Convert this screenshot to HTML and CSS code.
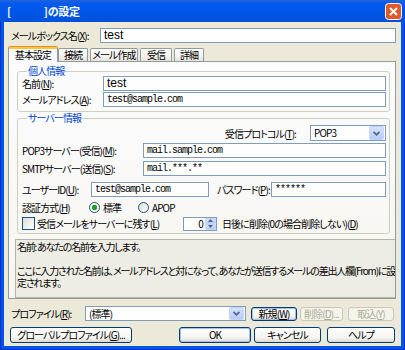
FILE: index.html
```html
<!DOCTYPE html>
<html lang="ja">

<head>
    <meta charset="UTF-8">
    <meta name="viewport" content="width=device-width, initial-scale=1.0">
    <title>の設定</title>
    <link rel="stylesheet" href="styles.css">
</head>

<body>
    <div class="window">
        <div class="titlebar">
            <span class="title">[<span class="blank"></span>]の設定</span>
            <span class="close">
                <svg width="17" height="17" viewBox="0 0 17 17">
                    <rect x="0.5" y="0.5" width="16" height="16" rx="3" fill="#E0592A" stroke="#fff" />
                    <path d="M5 5l7 7M12 5l-7 7" stroke="#fff" stroke-width="2" />
                </svg>
            </span>
        </div>

        <div class="client">
            <div class="mailbox">
                <label class="lbl-mailbox">メールボックス名(<u>X</u>):</label>
                <div class="edit sans grow">test</div>
            </div>

            <div class="tabs">
                <span class="tab active">基本設定</span>
                <span class="tab tab-conn">接続</span>
                <span class="tab tab-compose">メール作成</span>
                <span class="tab tab-recv">受信</span>
                <span class="tab tab-detail">詳細</span>
            </div>

            <div class="panel">
                <fieldset class="group personal">
                    <legend>個人情報</legend>
                    <div class="row">
                        <label class="lbl-personal">名前(<u>N</u>):</label>
                        <div class="edit sans grow">test</div>
                    </div>
                    <div class="row gap1">
                        <label class="lbl-personal">メールアドレス(<u>A</u>):</label>
                        <div class="edit mono grow">test@sample.com</div>
                    </div>
                </fieldset>

                <fieldset class="group server">
                    <legend>サーバー情報</legend>
                    <div class="row proto">
                        <label class="lbl-proto">受信プロトコル(<u>T</u>):</label>
                        <div class="select">
                            <span class="select-text">POP3</span>
                            <span class="drop"><svg width="7" height="5" viewBox="0 0 7 5"><path d="M0.5 0.8l3 3 3-3" fill="none" stroke="#4D6185" stroke-width="1.6" /></svg></span>
                        </div>
                    </div>
                    <div class="row gap2">
                        <label class="lbl-server">POP3サーバー(受信)(<u>M</u>):</label>
                        <div class="edit mono grow">mail.sample.com</div>
                    </div>
                    <div class="row gap3">
                        <label class="lbl-server">SMTPサーバー(送信)(<u>S</u>):</label>
                        <div class="edit mono grow">mail.***.**</div>
                    </div>
                    <div class="row gap6">
                        <label class="lbl-user">ユーザーID(<u>U</u>):</label>
                        <div class="edit mono user">test@sample.com</div>
                        <label class="lbl-pass">パスワード(<u>P</u>):</label>
                        <div class="edit mono grow">******</div>
                    </div>
                    <div class="row auth">
                        <label class="lbl-auth">認証方式(<u>H</u>)</label>
                        <span class="radio checked"></span><span class="opt">標準</span>
                        <span class="radio"></span><span class="opt">APOP</span>
                    </div>
                    <div class="row keep">
                        <span class="check"></span>
                        <span class="keep-text">受信メールをサーバーに残す(<u>L</u>)</span>
                        <div class="spin">
                            <span class="spin-value">0</span>
                            <span class="spin-btns">
                                <span class="spin-btn"><svg width="5" height="3" viewBox="0 0 5 3"><path d="M0 3l2.5-3 2.5 3z" fill="#4D6185" /></svg></span>
                                <span class="spin-btn"><svg width="5" height="3" viewBox="0 0 5 3"><path d="M0 0l2.5 3 2.5-3z" fill="#4D6185" /></svg></span>
                            </span>
                        </div>
                        <span class="after-text">日後に削除(0の場合削除しない)(<u>D</u>)</span>
                    </div>
                </fieldset>

                <div class="desc">名前: あなたの名前を入力します。<br><br>ここに入力された名前は、メールアドレスと対になって、あなたが送信するメールの差出人欄(From)に設<br>定されます。</div>
            </div>

            <div class="profile">
                <label class="lbl-profile">プロファイル(<u>R</u>):</label>
                <div class="select combo">
                    <span class="select-text">(標準)</span>
                    <span class="drop"><svg width="7" height="5" viewBox="0 0 7 5"><path d="M0.5 0.8l3 3 3-3" fill="none" stroke="#4D6185" stroke-width="1.6" /></svg></span>
                </div>
                <button class="btn default btn-new" type="button">新規(<u>W</u>)</button>
                <button class="btn disabled btn-del" type="button">削除(<u>D</u>)...</button>
                <button class="btn disabled btn-import" type="button">取込(<u>Y</u>)</button>
            </div>

            <div class="actions">
                <button class="btn btn-global" type="button">グローバルプロファイル(<u>G</u>)...</button>
                <button class="btn default btn-ok" type="button">OK</button>
                <button class="btn btn-cancel" type="button">キャンセル</button>
                <button class="btn btn-help" type="button">ヘルプ</button>
            </div>
        </div>
    </div>
</body>

</html>
```

FILE: styles.css
```css
* {
    margin: 0;
    padding: 0;
    box-sizing: border-box;
}

body {
    width: 405px;
    height: 350px;
    overflow: hidden;
    font-family: "Noto Sans CJK JP", sans-serif;
    font-size: 10px;
    letter-spacing: -0.9px;
    font-feature-settings: "palt";
    color: #000;
}

u {
    text-decoration: underline;
    text-underline-offset: 1px;
}

.window {
    height: 350px;
    display: flex;
    flex-direction: column;
    background: #0055E5;
    box-shadow: inset 1px 0 #0831D9, inset -1px 0 #0831D9, inset 0 -1px #0831D9;
}

/* title bar */
.titlebar {
    height: 22px;
    display: flex;
    align-items: center;
    justify-content: space-between;
    padding: 0 3px 0 7px;
    background: linear-gradient(#2B62C9 0, #0A5DEE 2px, #0058EE 6px, #0054E3 16px, #0050DD 22px);
    color: #fff;
}

.title {
    font-weight: bold;
    font-size: 11px;
    letter-spacing: -0.3px;
    line-height: 22px;
    display: flex;
}

.blank {
    width: 33px;
}

.close {
    display: flex;
    margin-top: 1px;
}

/* client area */
.client {
    flex: 1;
    margin: 0 4px 4px;
    padding: 0 5px 0 4px;
    background: #ECE9D8;
}

.mailbox {
    display: flex;
    height: 15px;
    margin-top: 6px;
}

.lbl-mailbox {
    width: 92px;
    padding-left: 3px;
    line-height: 15px;
    white-space: nowrap;
}

.edit {
    height: 15px;
    border: 1px solid #7F9DB9;
    background: #fff;
    padding-left: 3px;
    white-space: nowrap;
    overflow: hidden;
}

.grow {
    flex: 1;
}

.sans {
    font-family: "Liberation Sans", sans-serif;
    font-size: 12px;
    letter-spacing: 0;
    line-height: 13px;
}

.mono {
    font-family: "Liberation Mono", monospace;
    font-size: 10px;
    letter-spacing: -1px;
    line-height: 13px;
}

/* tabs */
.tabs {
    display: flex;
    align-items: flex-end;
    height: 15px;
    margin-top: 3px;
}

.tab {
    height: 13px;
    border: 1px solid #919B9C;
    border-bottom: none;
    border-radius: 2px 2px 0 0;
    background: linear-gradient(#FFFFFF, #F3F3EF 60%, #E4E2D8);
    text-align: center;
    line-height: 12px;
    margin-right: 2px;
    white-space: nowrap;
}

.tab.active {
    position: relative;
    z-index: 1;
    height: 16px;
    width: 50px;
    margin-bottom: -1px;
    margin-right: 0;
    border-top: 1px solid #E68B2C;
    box-shadow: inset 0 2px #FFC73C;
    background: #FCFCFE;
    line-height: 15px;
}

.tab-conn {
    width: 30px;
}

.tab-compose {
    width: 48px;
}

.tab-recv {
    width: 32px;
}

.tab-detail {
    width: 30px;
}

/* tab panel */
.panel {
    height: 238px;
    border: 1px solid #919B9C;
    background: linear-gradient(#FCFCFE, #F6F5F0);
    overflow: hidden;
}

.group {
    width: 373px;
    margin-left: 8px;
    border: 1px solid #D0D0BF;
    border-radius: 3px;
    padding: 0 3px 4px 4px;
}

.group legend {
    margin-left: 5px;
    padding: 0 1px;
    line-height: 10px;
    color: #0046D5;
}

.personal {
    margin-top: 4px;
}

.server {
    margin-top: 1px;
    padding-bottom: 2px;
}

.row {
    display: flex;
    align-items: center;
    height: 15px;
    white-space: nowrap;
}

.gap1 {
    margin-top: 1px;
}

.gap2 {
    margin-top: 2px;
}

.gap3 {
    margin-top: 3px;
}

.gap6 {
    margin-top: 6px;
}

.lbl-personal {
    width: 81px;
}

.lbl-server {
    width: 121px;
}

.lbl-user {
    width: 69px;
}

.edit.user {
    width: 118px;
}

.lbl-pass {
    width: 62px;
    padding-left: 8px;
}

.proto {
    height: 16px;
    margin-top: 2px;
    justify-content: flex-end;
}

.lbl-proto {
    margin-right: 14px;
}

.select {
    display: flex;
    align-items: center;
    justify-content: space-between;
    width: 76px;
    height: 16px;
    border: 1px solid #7F9DB9;
    background: #fff;
    padding: 0 1px 0 3px;
}

.select-text {
    line-height: 14px;
}

.drop {
    display: flex;
    align-items: center;
    justify-content: center;
    width: 15px;
    height: 14px;
    border-radius: 2px;
    background: linear-gradient(#D5E2FC, #B7CCF7);
    border: 1px solid #C3D3FD;
}

.auth {
    height: 14px;
    margin-top: 3px;
}

.lbl-auth {
    width: 67px;
}

.radio {
    width: 11px;
    height: 11px;
    border: 1px solid #1C5180;
    border-radius: 50%;
    background: linear-gradient(135deg, #DCDCD7, #FFFFFF);
    margin-right: 3px;
}

.radio.checked {
    background: radial-gradient(circle, #21A121 0 2.5px, #fff 3px);
}

.opt {
    width: 35px;
}

.keep {
    height: 15px;
    margin-top: 2px;
}

.check {
    width: 13px;
    height: 13px;
    border: 1px solid #1C5180;
    background: linear-gradient(135deg, #DCDCD7, #FFFFFF);
    margin-right: 2px;
}

.keep-text {
    width: 146px;
}

.spin {
    display: flex;
    align-items: center;
    width: 34px;
    height: 14px;
    border: 1px solid #7F9DB9;
    background: #fff;
}

.spin-value {
    flex: 1;
    text-align: right;
    padding-right: 2px;
    line-height: 12px;
}

.spin-btns {
    display: flex;
    flex-direction: column;
    width: 11px;
    height: 12px;
}

.spin-btn {
    flex: 1;
    display: flex;
    align-items: center;
    justify-content: center;
    background: linear-gradient(#D5E2FC, #B7CCF7);
    border: 1px solid #C3D3FD;
    border-radius: 1px;
}

.after-text {
    margin-left: 5px;
}

/* description */
.desc {
    width: 381px;
    height: 59px;
    margin: 5px 0 0 6px;
    border: 1px solid #B5B4A8;
    background: #EEEDE5;
    padding: 1px 1px;
    line-height: 12px;
    letter-spacing: -1.2px;
    white-space: nowrap;
    overflow: hidden;
}

/* bottom rows */
.profile {
    display: flex;
    align-items: center;
    height: 15px;
    margin-top: 7px;
    white-space: nowrap;
}

.lbl-profile {
    width: 77px;
    padding-left: 3px;
}

.combo {
    width: 161px;
    height: 15px;
    margin-right: 5px;
}

.combo .drop {
    height: 13px;
}

.btn {
    font-family: inherit;
    font-size: 10px;
    letter-spacing: inherit;
    font-feature-settings: "palt";
    height: 14px;
    line-height: 12px;
    border: 1px solid #003C74;
    border-radius: 3px;
    background: linear-gradient(#FFFFFF, #F4F4F0 70%, #DCD8CC);
    color: #000;
    white-space: nowrap;
}

.btn.default {
    box-shadow: inset 0 0 0 1px #A6C0EE;
}

.btn.disabled {
    border-color: #C9C7BA;
    color: #ACA899;
    background: #F5F4EA;
}

.btn-new {
    width: 46px;
    margin-right: 3px;
}

.btn-del {
    width: 43px;
    margin-right: 5px;
}

.btn-import {
    width: 46px;
}

.actions {
    display: flex;
    height: 16px;
    margin-top: 6px;
}

.actions .btn {
    height: 16px;
    line-height: 14px;
}

.btn-global {
    width: 122px;
    margin-left: 2px;
}

.btn-ok {
    width: 72px;
    margin-left: auto;
    margin-right: 3px;
}

.btn-cancel {
    width: 67px;
    margin-right: 6px;
}

.btn-help {
    width: 68px;
    margin-right: 1px;
}
```
